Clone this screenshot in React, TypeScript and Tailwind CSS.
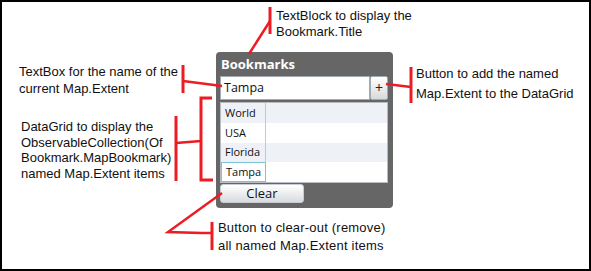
const rows = ["World", "USA", "Florida", "Tampa"];

const Note = ({ className, lines }: { className: string; lines: string[] }) => (
  <div className={`absolute text-[13px] text-[#111] whitespace-nowrap ${className}`}>
    {lines.map((l, i) => (
      <div key={i}>{l}</div>
    ))}
  </div>
);

const BookmarkPanel = () => (
  <div className="absolute left-[214px] top-[50px] w-[177px] h-[156px] rounded-[4px] bg-[#666666] px-[4px] pb-[5px] flex flex-col font-['Open_Sans',sans-serif]">
    <div className="h-[24px] flex items-center pl-[1px] text-[13px] font-bold text-white leading-none">Bookmarks</div>
    <div className="flex h-[24px] w-[168px]">
      <div className="flex-1 bg-white border border-[#a3aab3] flex items-center pl-[3px] text-[12.5px] text-[#111]">Tampa</div>
      <div className="w-[18px] rounded-[2px] border border-[#a3aab3] bg-gradient-to-b from-white to-[#d7dadd] flex items-center justify-center text-[14px] text-[#222] leading-none">+</div>
    </div>
    <div className="mt-[2px] w-[168px] h-[81px] bg-white border border-[#b8bcc0] flex flex-col">
      {rows.map((r, i) => (
        <div key={r} className={`flex h-[20px] ${i % 2 === 0 ? "bg-[#eef2f7]" : "bg-white"}`}>
          <div
            className={`w-[45px] flex items-center pl-[4px] text-[11px] text-[#111] ${
              r === "Tampa" ? "border border-[#7fc2d6] bg-white" : "border-r border-[#c8c8c8]"
            }`}
          >
            {r}
          </div>
          <div className="flex-1" />
        </div>
      ))}
    </div>
    <div className="mt-[1px] w-[84px] h-[19px] rounded-[3px] border border-[#c9cdd1] bg-gradient-to-b from-white to-[#d8dcdf] flex items-center justify-center text-[13px] text-[#111] leading-none">
      Clear
    </div>
  </div>
);

export default function App() {
  return (
    <div className="w-[591px] h-[271px] bg-black p-[2px]">
      <div className="relative w-full h-full bg-white overflow-hidden font-['Liberation_Sans',Arial,sans-serif] leading-[16px]">
        <Note className="left-[274px] top-[6px]" lines={["TextBlock to display the", "Bookmark.Title"]} />
        <Note className="left-[17px] top-[62px] leading-[16.5px]" lines={["TextBox for the name of the", "current Map.Extent"]} />
        <Note className="left-[414px] top-[62px] leading-[20px]" lines={["Button to add the named", "Map.Extent to the DataGrid"]} />
        <Note className="left-[19px] top-[117px] leading-[15.7px]" lines={["DataGrid to display the", "ObservableCollection(Of", "Bookmark.MapBookmark)", "named Map.Extent items"]} />
        <Note className="left-[216px] top-[217px] leading-[18px] tracking-[0.2px]" lines={["Button to  clear-out (remove)", "all named Map.Extent items"]} />

        <BookmarkPanel />

        <svg className="absolute left-[-2px] top-[-2px]" width="591" height="271" viewBox="0 0 591 271">
          <g stroke="#ed1c24" fill="none" strokeLinecap="butt">
            <line x1="270" y1="7" x2="270" y2="34" strokeWidth="3" />
            <line x1="270" y1="21" x2="249" y2="54" strokeWidth="2.5" />

            <line x1="183" y1="65" x2="183" y2="93" strokeWidth="3" />
            <line x1="183" y1="81" x2="222" y2="86" strokeWidth="2.5" />

            <line x1="386" y1="84" x2="411" y2="87" strokeWidth="2.5" />
            <line x1="411" y1="67" x2="411" y2="103" strokeWidth="3" />

            <line x1="176" y1="116" x2="176" y2="181" strokeWidth="3" />
            <line x1="176" y1="143" x2="201" y2="141" strokeWidth="2.5" />
            <polyline points="212,98 201,98 201,180 213,180" strokeWidth="3" />

            <polyline points="222,193 168,232 202,233" strokeWidth="2.5" />
            <line x1="212" y1="222" x2="212" y2="250" strokeWidth="3" />
            <line x1="202" y1="233" x2="212" y2="233" strokeWidth="2.5" />
          </g>
        </svg>
      </div>
    </div>
  );
}
